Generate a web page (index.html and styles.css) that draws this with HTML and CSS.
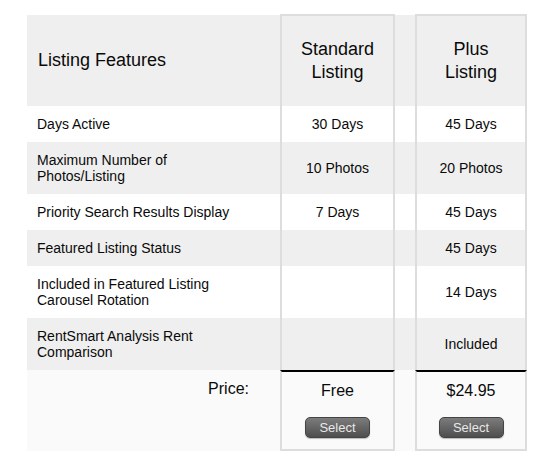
FILE: index.html
```html
<!DOCTYPE html>
<html>
<head>
<meta charset="utf-8">
<link rel="stylesheet" href="styles.css">
</head>
<body>
<div class="wrap">
<table class="compare">
  <colgroup>
    <col class="c-feat">
    <col class="c-std">
    <col class="c-gap">
    <col class="c-plus">
  </colgroup>
  <thead>
    <tr class="head">
      <th class="feat">Listing Features</th>
      <th class="plan">Standard<br>Listing</th>
      <th class="gap"></th>
      <th class="plan">Plus<br>Listing</th>
    </tr>
  </thead>
  <tbody>
    <tr class="row">
      <td class="feat">Days Active</td>
      <td class="plan">30 Days</td>
      <td class="gap"></td>
      <td class="plan">45 Days</td>
    </tr>
    <tr class="row alt">
      <td class="feat">Maximum Number of Photos/Listing</td>
      <td class="plan">10 Photos</td>
      <td class="gap"></td>
      <td class="plan">20 Photos</td>
    </tr>
    <tr class="row">
      <td class="feat">Priority Search Results Display</td>
      <td class="plan">7 Days</td>
      <td class="gap"></td>
      <td class="plan">45 Days</td>
    </tr>
    <tr class="row alt">
      <td class="feat">Featured Listing Status</td>
      <td class="plan"></td>
      <td class="gap"></td>
      <td class="plan">45 Days</td>
    </tr>
    <tr class="row">
      <td class="feat">Included in Featured Listing Carousel Rotation</td>
      <td class="plan"></td>
      <td class="gap"></td>
      <td class="plan">14 Days</td>
    </tr>
    <tr class="row alt">
      <td class="feat">RentSmart Analysis Rent Comparison</td>
      <td class="plan"></td>
      <td class="gap"></td>
      <td class="plan">Included</td>
    </tr>
    <tr class="price">
      <td class="feat">Price:</td>
      <td class="plan"><div class="amount">Free</div><a class="btn">Select</a></td>
      <td class="gap"></td>
      <td class="plan"><div class="amount">$24.95</div><a class="btn">Select</a></td>
    </tr>
  </tbody>
</table>
</div>
</body>
</html>
```

FILE: styles.css
```css
html, body {
  margin: 0;
  padding: 0;
  background: #fff;
}
.wrap {
  padding: 14px 0 0 27px;
}
.compare {
  width: 500px;
  table-layout: fixed;
  border-collapse: separate;
  border-spacing: 0;
  font-family: "Liberation Sans", Arial, sans-serif;
  color: #0a0a0a;
}
.c-feat { width: 253px; }
.c-std { width: 115px; }
.c-gap { width: 20px; }
.c-plus { width: 112px; }

.compare th, .compare td {
  padding: 0;
  font-weight: normal;
  vertical-align: middle;
}
.compare .plan {
  text-align: center;
  border-left: 2px solid #dddddd;
  border-right: 2px solid #dddddd;
}

/* header */
.head th {
  background: #efefef;
  background-clip: padding-box;
  font-size: 18px;
  line-height: 23px;
  height: 92px;
  box-sizing: border-box;
}
.head .feat {
  text-align: left;
  padding-left: 11px;
  border-top: 1px solid transparent;
}
.head .gap {
  border-top: 1px solid transparent;
}
.head .plan {
  border-top: 2px solid #dddddd;
  background-clip: border-box;
}

/* body rows */
.row td {
  font-size: 14px;
  line-height: 16px;
  padding-top: 10px;
  padding-bottom: 10px;
  background: #fff;
}
.row.alt td {
  background: #efefef;
}
.row .feat {
  padding-left: 10px;
  padding-right: 33px;
}

/* price row */
.price td {
  background: #fafafa;
  vertical-align: top;
}
.price .feat {
  text-align: right;
  padding-right: 31px;
  padding-top: 10px;
  font-size: 16px;
  line-height: 18px;
}
.price .plan {
  border-top: 2px solid #000;
  border-bottom: 2px solid #dddddd;
  padding-top: 10px;
  padding-bottom: 11px;
}
.amount {
  font-size: 16px;
  line-height: 18px;
}
.btn {
  display: inline-block;
  margin-top: 17px;
  width: 65px;
  height: 21px;
  box-sizing: border-box;
  border: 1px solid #444;
  border-radius: 5px;
  background: linear-gradient(#7c7c7c, #4e4e4e);
  box-shadow: 0 1px 1px rgba(0, 0, 0, 0.25);
  color: #e8e8e8;
  font-size: 13px;
  line-height: 19px;
  text-align: center;
  vertical-align: top;
  cursor: pointer;
}
```
